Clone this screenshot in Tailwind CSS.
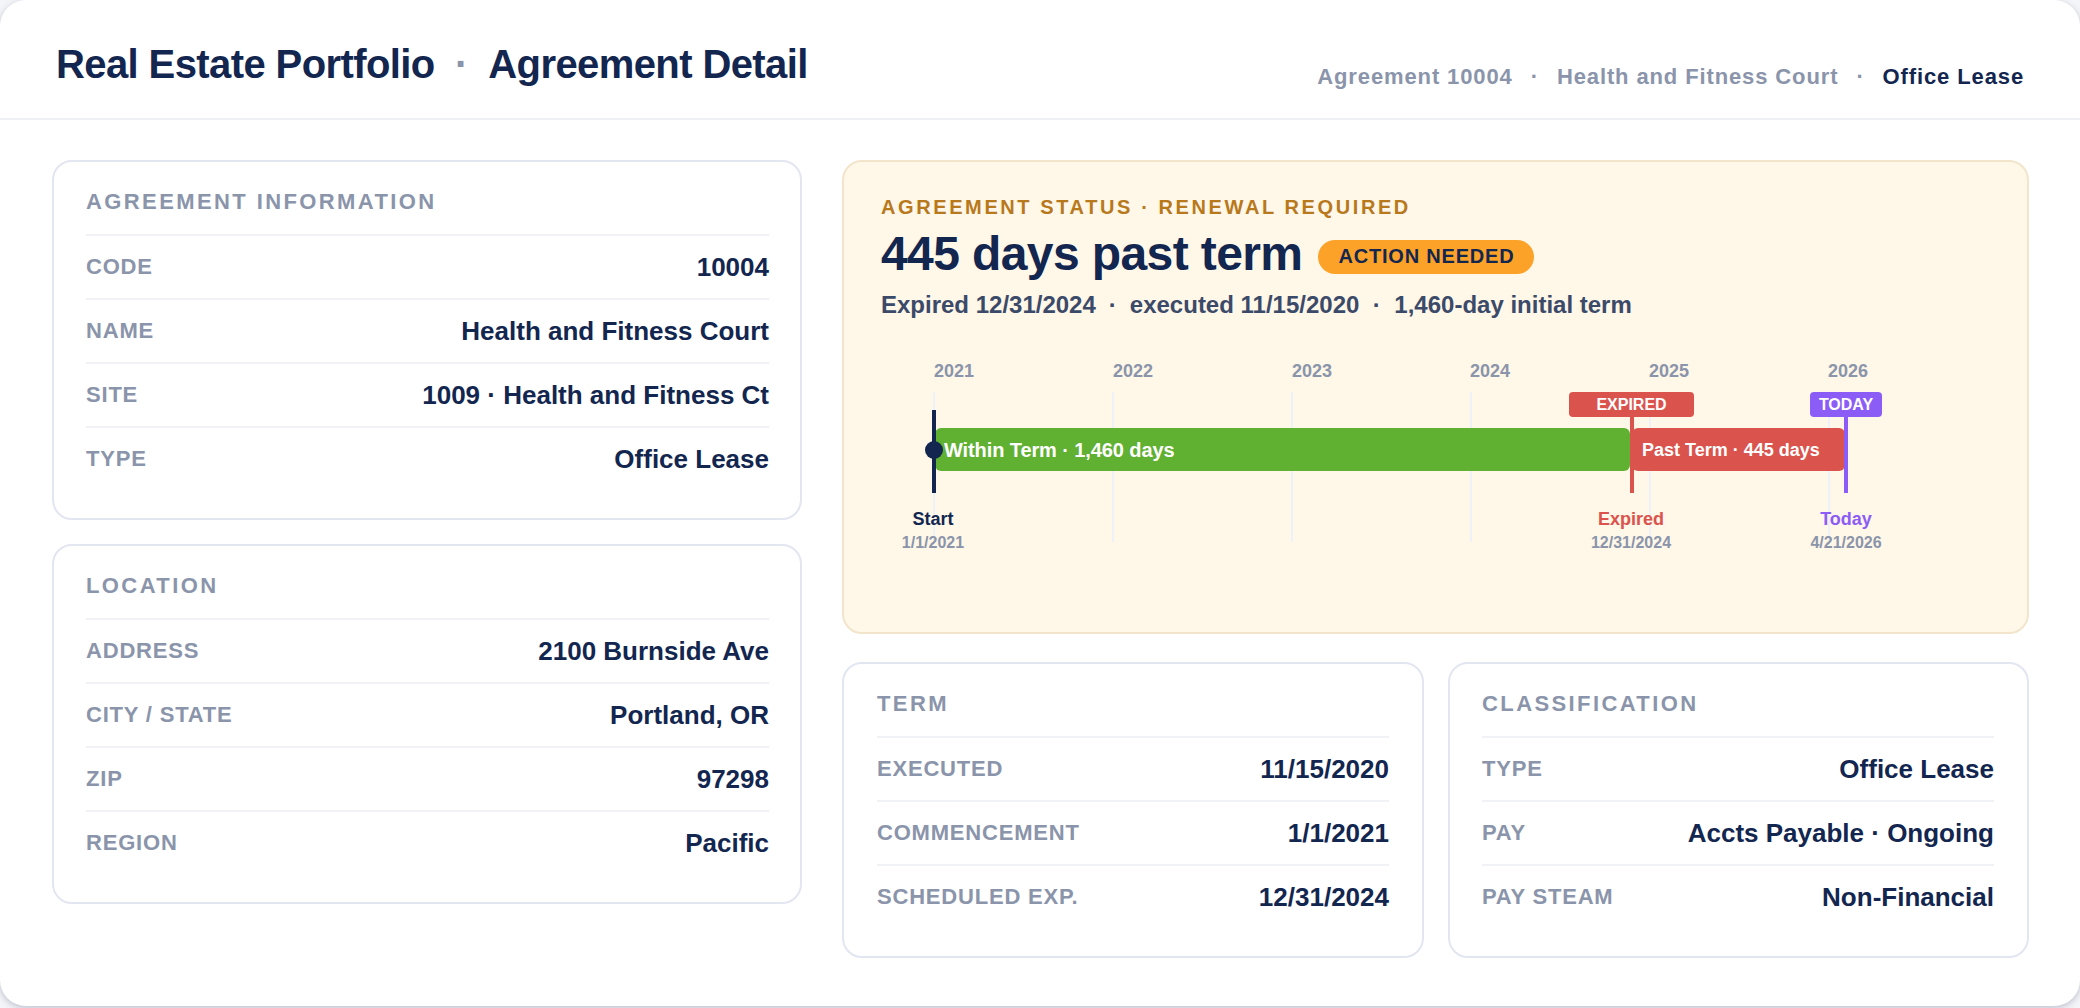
<!doctype html>
<html><head><meta charset="utf-8"><script src="https://cdn.jsdelivr.net/npm/@tailwindcss/browser@4"></script></head>
<body class="bg-[#f4f5f8] font-['Liberation_Sans',sans-serif] w-[2080px] h-[1008px] overflow-hidden">
<div class="h-[1006px] bg-white rounded-[26px] flex flex-col overflow-hidden shadow-[0_2px_6px_rgba(60,70,110,0.3)]">
<header class="h-[120px] shrink-0 border-b-2 border-[#eef0f4] flex justify-between px-[56px]">
<h1 class="mt-[39px] text-[40px] leading-[50px] font-bold tracking-[-0.6px] text-[#12264f] whitespace-pre">Real Estate Portfolio<span class="text-[#8a94aa] font-bold mx-[20.5px]">·</span>Agreement Detail</h1>
<div class="mt-[62px] text-[22px] leading-[30px] font-bold tracking-[0.88px] text-[#8a94aa] whitespace-pre">Agreement 10004<span class="mx-[18px]">·</span>Health and Fitness Court<span class="mx-[18px]">·</span><span class="text-[#12264f]">Office Lease</span></div>
</header>
<main class="flex gap-[40px] pl-[52px] pt-[40px]">
<div class="w-[750px] flex flex-col gap-[24px]">
<section class="h-[360px] rounded-[20px] border-2 border-[#e2e6f1] pl-[32px] pr-[31px] pt-[25px]">
<h2 class="text-[22px] leading-[30px] font-bold tracking-[2.4px] text-[#8a94aa]">AGREEMENT INFORMATION</h2>
<div class="mt-[17px]">
<div class="h-[64px] border-t-2 border-[#f0f2f6] flex justify-between text-[#12264f]"><span class="mt-[16px] text-[22px] leading-[30px] font-bold tracking-[0.8px] text-[#8a94aa]">CODE</span><span class="mt-[13px] text-[26px] leading-[36px] font-bold">10004</span></div>
<div class="h-[64px] border-t-2 border-[#f0f2f6] flex justify-between text-[#12264f]"><span class="mt-[16px] text-[22px] leading-[30px] font-bold tracking-[0.8px] text-[#8a94aa]">NAME</span><span class="mt-[13px] text-[26px] leading-[36px] font-bold">Health and Fitness Court</span></div>
<div class="h-[64px] border-t-2 border-[#f0f2f6] flex justify-between text-[#12264f]"><span class="mt-[16px] text-[22px] leading-[30px] font-bold tracking-[0.8px] text-[#8a94aa]">SITE</span><span class="mt-[13px] text-[26px] leading-[36px] font-bold">1009 · Health and Fitness Ct</span></div>
<div class="h-[64px] border-t-2 border-[#f0f2f6] flex justify-between text-[#12264f]"><span class="mt-[16px] text-[22px] leading-[30px] font-bold tracking-[0.8px] text-[#8a94aa]">TYPE</span><span class="mt-[13px] text-[26px] leading-[36px] font-bold">Office Lease</span></div>
</div></section>
<section class="h-[360px] rounded-[20px] border-2 border-[#e2e6f1] pl-[32px] pr-[31px] pt-[25px]">
<h2 class="text-[22px] leading-[30px] font-bold tracking-[2.4px] text-[#8a94aa]">LOCATION</h2>
<div class="mt-[17px]">
<div class="h-[64px] border-t-2 border-[#f0f2f6] flex justify-between text-[#12264f]"><span class="mt-[16px] text-[22px] leading-[30px] font-bold tracking-[0.8px] text-[#8a94aa]">ADDRESS</span><span class="mt-[13px] text-[26px] leading-[36px] font-bold">2100 Burnside Ave</span></div>
<div class="h-[64px] border-t-2 border-[#f0f2f6] flex justify-between text-[#12264f]"><span class="mt-[16px] text-[22px] leading-[30px] font-bold tracking-[0.8px] text-[#8a94aa]">CITY / STATE</span><span class="mt-[13px] text-[26px] leading-[36px] font-bold">Portland, OR</span></div>
<div class="h-[64px] border-t-2 border-[#f0f2f6] flex justify-between text-[#12264f]"><span class="mt-[16px] text-[22px] leading-[30px] font-bold tracking-[0.8px] text-[#8a94aa]">ZIP</span><span class="mt-[13px] text-[26px] leading-[36px] font-bold">97298</span></div>
<div class="h-[64px] border-t-2 border-[#f0f2f6] flex justify-between text-[#12264f]"><span class="mt-[16px] text-[22px] leading-[30px] font-bold tracking-[0.8px] text-[#8a94aa]">REGION</span><span class="mt-[13px] text-[26px] leading-[36px] font-bold">Pacific</span></div>
</div></section>
</div>
<div class="w-[1187px] flex flex-col gap-[28px]">
<section class="relative h-[474px] rounded-[20px] border-2 border-[#f2e5cc] bg-[#fff7e8] px-[37px] pt-[31px]">
<div class="text-[20px] leading-[28px] font-bold tracking-[2.6px] text-[#b8781c]">AGREEMENT STATUS · RENEWAL REQUIRED</div>
<div class="flex items-center gap-[16px] mt-[3px] h-[60px]"><span class="text-[48px] leading-[60px] font-bold tracking-[-0.6px] text-[#12264f]">445 days past term</span><span class="mt-[5px] h-[34px] px-[20px] rounded-full bg-[#fca228] text-[20px] leading-[32px] font-bold tracking-[0.8px] text-[#12264f]">ACTION NEEDED</span></div>
<div class="mt-[4px] text-[24px] leading-[34px] font-bold text-[#3b4a68] whitespace-pre">Expired 12/31/2024<span class="mx-[13px]">·</span>executed 11/15/2020<span class="mx-[13.5px]">·</span>1,460-day initial term</div>
<!-- timeline -->
<div class="absolute left-[1px] top-[1px] w-full h-full text-[18px] font-bold">
<span class="absolute left-[89px] top-[195px] leading-[26px] text-[#8a94aa]">2021</span>
<span class="absolute left-[268px] top-[195px] leading-[26px] text-[#8a94aa]">2022</span>
<span class="absolute left-[447px] top-[195px] leading-[26px] text-[#8a94aa]">2023</span>
<span class="absolute left-[625px] top-[195px] leading-[26px] text-[#8a94aa]">2024</span>
<span class="absolute left-[804px] top-[195px] leading-[26px] text-[#8a94aa]">2025</span>
<span class="absolute left-[983px] top-[195px] leading-[26px] text-[#8a94aa]">2026</span>
<i class="absolute left-[88px] top-[229px] w-[2px] h-[150px] bg-[#eff1f8]"></i>
<i class="absolute left-[267px] top-[229px] w-[2px] h-[150px] bg-[#eff1f8]"></i>
<i class="absolute left-[446px] top-[229px] w-[2px] h-[150px] bg-[#eff1f8]"></i>
<i class="absolute left-[625px] top-[229px] w-[2px] h-[150px] bg-[#eff1f8]"></i>
<i class="absolute left-[804px] top-[229px] w-[2px] h-[150px] bg-[#eff1f8]"></i>
<i class="absolute left-[983px] top-[229px] w-[2px] h-[150px] bg-[#eff1f8]"></i>
<i class="absolute left-[785px] top-[250px] w-[4px] h-[80px] bg-[#db534d]"></i>
<div class="absolute left-[90px] top-[265px] w-[695px] h-[43px] rounded-[6px] bg-[#60b032] text-white text-[20px] tracking-[-0.1px] leading-[44px] pl-[9px]">Within Term · 1,460 days</div>
<div class="absolute left-[787px] top-[265px] w-[213px] h-[43px] rounded-[6px] bg-[#db534d] text-white text-[18px] leading-[45px] pl-[10px]">Past Term · 445 days</div>
<i class="absolute left-[87px] top-[247px] w-[4px] h-[83px] bg-[#12264f]"></i>
<i class="absolute left-[80px] top-[278px] w-[18px] h-[18px] rounded-full bg-[#12264f]"></i>
<i class="absolute left-[999px] top-[250px] w-[4px] h-[80px] bg-[#8b5cf6]"></i>
<div class="absolute left-[724px] top-[229px] w-[125px] h-[25px] rounded-[4px] bg-[#db534d] text-white text-center text-[16px] leading-[25px]">EXPIRED</div>
<div class="absolute left-[965px] top-[229px] w-[72px] h-[25px] rounded-[4px] bg-[#8b5cf6] text-white text-center text-[16px] leading-[25px]">TODAY</div>
<div class="absolute left-[43px] top-[343px] w-[90px] text-center"><div class="text-[18px] leading-[26px] text-[#12264f]">Start</div><div class="text-[16px] leading-[22px] text-[#8a94aa]">1/1/2021</div></div>
<div class="absolute left-[726px] top-[343px] w-[120px] text-center"><div class="text-[18px] leading-[26px] text-[#db534d]">Expired</div><div class="text-[16px] leading-[22px] text-[#8a94aa]">12/31/2024</div></div>
<div class="absolute left-[941px] top-[343px] w-[120px] text-center"><div class="text-[18px] leading-[26px] text-[#8b5cf6]">Today</div><div class="text-[16px] leading-[22px] text-[#8a94aa]">4/21/2026</div></div>
</div>
</section>
<div class="flex gap-[24px]">
<section class="w-[582px] h-[296px] rounded-[20px] border-2 border-[#e2e6f1] px-[33px] pt-[25px]">
<h2 class="text-[22px] leading-[30px] font-bold tracking-[2.4px] text-[#8a94aa]">TERM</h2>
<div class="mt-[17px]">
<div class="h-[64px] border-t-2 border-[#f0f2f6] flex justify-between text-[#12264f]"><span class="mt-[16px] text-[22px] leading-[30px] font-bold tracking-[0.8px] text-[#8a94aa]">EXECUTED</span><span class="mt-[13px] text-[26px] leading-[36px] font-bold">11/15/2020</span></div>
<div class="h-[64px] border-t-2 border-[#f0f2f6] flex justify-between text-[#12264f]"><span class="mt-[16px] text-[22px] leading-[30px] font-bold tracking-[0.8px] text-[#8a94aa]">COMMENCEMENT</span><span class="mt-[13px] text-[26px] leading-[36px] font-bold">1/1/2021</span></div>
<div class="h-[64px] border-t-2 border-[#f0f2f6] flex justify-between text-[#12264f]"><span class="mt-[16px] text-[22px] leading-[30px] font-bold tracking-[0.8px] text-[#8a94aa]">SCHEDULED EXP.</span><span class="mt-[13px] text-[26px] leading-[36px] font-bold">12/31/2024</span></div>
</div></section>
<section class="w-[581px] h-[296px] rounded-[20px] border-2 border-[#e2e6f1] pl-[32px] pr-[33px] pt-[25px]">
<h2 class="text-[22px] leading-[30px] font-bold tracking-[2.4px] text-[#8a94aa]">CLASSIFICATION</h2>
<div class="mt-[17px]">
<div class="h-[64px] border-t-2 border-[#f0f2f6] flex justify-between text-[#12264f]"><span class="mt-[16px] text-[22px] leading-[30px] font-bold tracking-[0.8px] text-[#8a94aa]">TYPE</span><span class="mt-[13px] text-[26px] leading-[36px] font-bold">Office Lease</span></div>
<div class="h-[64px] border-t-2 border-[#f0f2f6] flex justify-between text-[#12264f]"><span class="mt-[16px] text-[22px] leading-[30px] font-bold tracking-[0.8px] text-[#8a94aa]">PAY</span><span class="mt-[13px] text-[26px] leading-[36px] font-bold">Accts Payable · Ongoing</span></div>
<div class="h-[64px] border-t-2 border-[#f0f2f6] flex justify-between text-[#12264f]"><span class="mt-[16px] text-[22px] leading-[30px] font-bold tracking-[0.8px] text-[#8a94aa]">PAY STEAM</span><span class="mt-[13px] text-[26px] leading-[36px] font-bold">Non-Financial</span></div>
</div></section>
</div>
</div>
</main>
</div>
</body></html>
